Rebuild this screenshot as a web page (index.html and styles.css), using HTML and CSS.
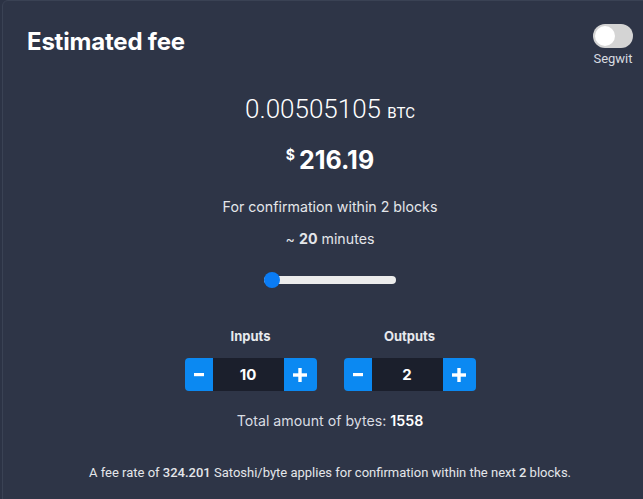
FILE: index.html
```html
<!DOCTYPE html>
<html>
<head>
<meta charset="utf-8">
<link rel="stylesheet" href="styles.css">
</head>
<body>
<div class="card">
  <div class="header">
    <h1 class="title">Estimated fee</h1>
    <div class="segwit">
      <span class="toggle"><span class="knob"></span></span>
      <span class="toggle-label">Segwit</span>
    </div>
  </div>
  <div class="content">
    <div class="btc">0.00505105 <span class="btc-unit">BTC</span></div>
    <div class="usd"><span class="usd-sign">$</span>216.19</div>
    <div class="confirm">For confirmation within 2 blocks</div>
    <div class="minutes">~ <b>20</b> minutes</div>
    <div class="slider"><span class="track"></span><span class="thumb"></span></div>
    <div class="counters">
      <div class="counter">
        <div class="counter-label">Inputs</div>
        <div class="stepper">
          <span class="btn minus"><svg width="10" height="4" viewBox="0 0 10 4"><rect width="10" height="3.2" fill="#fff"/></svg></span>
          <span class="value">10</span>
          <span class="btn plus"><svg width="14" height="14" viewBox="0 0 14 14"><rect x="5.3" y="0" width="3.4" height="14" fill="#fff"/><rect x="0" y="5.3" width="14" height="3.4" fill="#fff"/></svg></span>
        </div>
      </div>
      <div class="counter">
        <div class="counter-label">Outputs</div>
        <div class="stepper">
          <span class="btn minus"><svg width="10" height="4" viewBox="0 0 10 4"><rect width="10" height="3.2" fill="#fff"/></svg></span>
          <span class="value">2</span>
          <span class="btn plus"><svg width="14" height="14" viewBox="0 0 14 14"><rect x="5.3" y="0" width="3.4" height="14" fill="#fff"/><rect x="0" y="5.3" width="14" height="3.4" fill="#fff"/></svg></span>
        </div>
      </div>
    </div>
    <div class="bytes">Total amount of bytes: <b>1558</b></div>
    <div class="footer">A fee rate of <b>324.201</b> Satoshi/byte applies for confirmation within the next <b>2</b> blocks.</div>
  </div>
</div>
</body>
</html>
```

FILE: styles.css
```css
html, body {
  margin: 0;
  padding: 0;
  background: #2c3345;
  overflow: hidden;
  height: 499px;
}
body {
  font-family: Inter, "Liberation Sans", sans-serif;
  color: #e4e6ea;
}
.card {
  margin-left: 2px;
  width: 656px;
  height: 520px;
  box-sizing: border-box;
  background: #2e3547;
  border: 1px solid #3a4254;
  border-radius: 6px;
  padding: 0 24px;
}
.header {
  display: flex;
  justify-content: space-between;
  align-items: flex-start;
  padding-top: 23px;
}
.title {
  margin: 3px 0 0 0;
  font-size: 24px;
  font-weight: 700;
  color: #ffffff;
  letter-spacing: -0.2px;
}
.segwit {
  display: flex;
  flex-direction: column;
  align-items: center;
  gap: 3px;
}
.toggle {
  display: block;
  width: 40px;
  height: 24px;
  border-radius: 12px;
  background: #d4d4d4;
  position: relative;
}
.knob {
  position: absolute;
  left: 2px;
  top: 2px;
  width: 20px;
  height: 20px;
  border-radius: 50%;
  background: #ffffff;
}
.toggle-label {
  font-family: Roboto, sans-serif;
  font-size: 13px;
  color: #d8dbe0;
}
.content {
  display: flex;
  flex-direction: column;
  align-items: center;
}
.btc {
  margin-top: 27px;
  font-family: Roboto, sans-serif;
  font-weight: 300;
  font-size: 26px;
  color: #ffffff;
  line-height: 32px;
}
.btc-unit {
  font-size: 15px;
  font-weight: 400;
}
.usd {
  margin-top: 11px;
  font-size: 25px;
  font-weight: 700;
  color: #ffffff;
  line-height: 30px;
}
.usd-sign {
  font-size: 14px;
  vertical-align: 9px;
  margin-right: 4px;
}
.confirm {
  margin-top: 22px;
  font-size: 14.2px;
  line-height: 20px;
}
.minutes {
  margin-top: 12px;
  font-size: 14.2px;
  line-height: 20px;
}
.minutes b { font-weight: 700; }
.slider {
  margin-top: 23px;
  width: 132px;
  height: 16px;
  position: relative;
  display: flex;
  align-items: center;
}
.track {
  display: block;
  width: 100%;
  height: 8px;
  border-radius: 4px;
  background: #ececec;
}
.thumb {
  position: absolute;
  left: 0;
  top: 0;
  width: 16px;
  height: 16px;
  border-radius: 50%;
  background: #0a7cf5;
}
.counters {
  margin-top: 40px;
  display: flex;
  gap: 27px;
}
.counter {
  display: flex;
  flex-direction: column;
  align-items: center;
  gap: 14px;
}
.counter-label {
  font-size: 13px;
  font-weight: 700;
  line-height: 16px;
  color: #e8eaee;
}
.stepper {
  display: flex;
  width: 132px;
  height: 33px;
  border-radius: 4px;
  overflow: hidden;
}
.btn {
  display: flex;
  align-items: center;
  justify-content: center;
  background: #0b89f2;
}
.minus {
  width: 28px;
}
.plus {
  width: 33px;
}
.value {
  flex: 1;
  display: flex;
  align-items: center;
  justify-content: center;
  background: #1b1f2c;
  color: #ffffff;
  font-weight: 700;
  font-size: 15px;
}
.bytes {
  margin-top: 20px;
  font-size: 14.2px;
  line-height: 20px;
  color: #d9dce2;
}
.bytes b { color: #ffffff; font-weight: 600; }
.footer {
  margin-top: 34px;
  font-family: Roboto, sans-serif;
  font-size: 13px;
  line-height: 16px;
  color: #e4e6ea;
}
.footer b { font-weight: 500; }
```
